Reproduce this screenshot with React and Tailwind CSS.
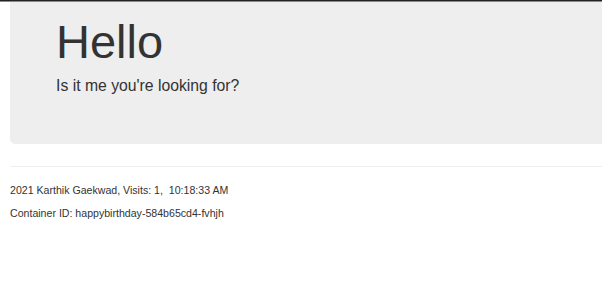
export default function App() {
  return (
    <div className="w-[602px] h-[294px] bg-white overflow-hidden font-['Liberation_Sans',Arial,sans-serif] text-[#333]">
      <div className="h-px bg-[#222]" />
      <div className="h-px bg-[#8a8a8a]" />
      <div className="ml-[10px] h-[142px] bg-[#eeeeee] rounded-bl-[5px] pl-[46px] pt-[16px]">
        <h1 className="text-[47px] leading-none font-normal">Hello</h1>
        <p className="mt-[13px] text-[15.75px] leading-none">Is it me you're looking for?</p>
      </div>
      <div className="ml-[10px] mt-[22px] h-px bg-[#eeeeee]" />
      <div className="ml-[10px] mt-[12px] text-[10.6px] leading-[23px]">
        <div>2021 Karthik Gaekwad, Visits: 1,&nbsp; 10:18:33 AM</div>
        <div>Container ID: happybirthday-584b65cd4-fvhjh</div>
      </div>
    </div>
  );
}
